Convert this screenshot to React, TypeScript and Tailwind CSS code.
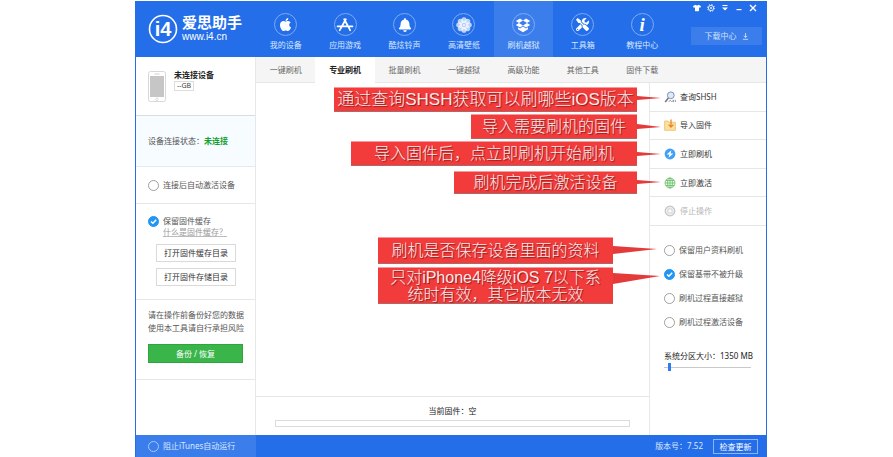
import React, { useState } from "react";
import clsx from "clsx";
import { FaApple, FaBell, FaTools, FaTshirt } from "react-icons/fa";

const AppsIcon = () => (
  <svg viewBox="0 0 18 16" className="w-[18px] h-4" fill="none" stroke="currentColor" strokeWidth="1.8" strokeLinecap="round">
    <path d="M9.8 2.2 4.6 11.6M8.2 2.2l5.2 9.4M1.6 9.4h9M13.6 9.4h2.8M3.7 13.2l.2-.4M14.1 13.2l-.2-.4" />
  </svg>
);

const FlowerIcon = () => (
  <svg viewBox="0 0 16 16" className="w-4 h-4" fill="currentColor">
    {[0, 45, 90, 135, 180, 225, 270, 315].map((deg) => (
      <ellipse key={deg} cx="8" cy="3.6" rx="2.7" ry="3.4" opacity="0.7" transform={`rotate(${deg} 8 8)`} />
    ))}
    <circle cx="8" cy="8" r="2" fill="#a9c8fa" />
    <circle cx="8" cy="8" r="1" />
  </svg>
);

// open box seen from above, flaps folded out
const BoxIcon = () => (
  <svg viewBox="0 0 16 16" className="w-4 h-4" fill="currentColor">
    <path d="M5 1.500 8 3.400 4 5.900 .8 3.900zM11 1.500 8 3.400l4 2.500 3.200-2zM4 5.900 8 8.400 5 10.400 .8 7.900zM12 5.900 8 8.400l3 2 4.200-2.500z" />
    <path d="M3 10.300 5 11.600 8 9.600l3 2 2-1.300v2L8 15.300 3 12.300z" />
  </svg>
);

const navItems = [
  { label: "我的设备", icon: <FaApple size={15} /> },
  { label: "应用游戏", icon: <AppsIcon /> },
  { label: "酷炫铃声", icon: <FaBell size={14} /> },
  { label: "高清壁纸", icon: <FlowerIcon /> },
  { label: "刷机越狱", icon: <BoxIcon /> },
  { label: "工具箱", icon: <FaTools size={13} /> },
  {
    label: "教程中心",
    icon: <span className="font-['Liberation_Serif',serif] text-[19px] leading-none font-bold italic">i</span>,
  },
];

const tabs = ["一键刷机", "专业刷机", "批量刷机", "一键越狱", "高级功能", "其他工具", "固件下载"];

const SearchIcon = () => (
  <svg viewBox="0 0 12 12" className="w-3 h-3" fill="none">
    <circle cx="6.8" cy="4.3" r="3.4" fill="#dce9fb" stroke="#8493ad" />
    <path d="M4.4 7 1.2 11" stroke="#77777f" strokeWidth="1.6" />
    <path d="M5 10.8c.2-1.4 1.4-1.8 2-.9s1.400 1 1.800-.3M9.400 8.800v2.200M11.300 8.800v2.200" stroke="#8a8a8a" strokeWidth=".9" />
  </svg>
);

const ImportIcon = () => (
  <svg viewBox="0 0 12 12" className="w-3 h-3" fill="none">
    <path d="M.6 2h3.600l1 1.300h6.200v8H.6z" fill="#fddf9f" stroke="#f0bb66" strokeWidth=".8" />
    <path d="M7 .6v7M4.600 5.600 7 8.100l2.400-2.500" stroke="#e2882b" strokeWidth="1.300" />
  </svg>
);

const FlashIcon = () => (
  <svg viewBox="0 0 12 12" className="w-3 h-3">
    <circle cx="6" cy="6" r="5.400" fill="#3fa0f8" />
    <path d="M7.400 2.200 2.600 6.500h2.700l-.8 3.300 4.900-4.300H6.600z" fill="#fff" />
  </svg>
);

const GlobeIcon = () => (
  <svg viewBox="0 0 12 12" className="w-3 h-3" fill="#e6f8e3" stroke="#5cb85c" strokeWidth=".7">
    <circle cx="6" cy="6" r="5" />
    <ellipse cx="6" cy="6" rx="2.400" ry="5" fill="none" />
    <path d="M6 1v10M1 6h10M1.800 3.500h8.400M1.800 8.500h8.400" />
  </svg>
);

const StopIcon = () => (
  <svg viewBox="0 0 12 12" className="w-3 h-3">
    <circle cx="6" cy="6" r="4.800" fill="#eee" stroke="#c4c4c4" strokeWidth="1.200" />
    <rect x="4" y="4" width="4" height="4" fill="#fafafa" stroke="#d0d0d0" strokeWidth=".8" />
  </svg>
);

const actions = [
  { label: "查询SHSH", icon: <SearchIcon /> },
  { label: "导入固件", icon: <ImportIcon /> },
  { label: "立即刷机", icon: <FlashIcon /> },
  { label: "立即激活", icon: <GlobeIcon /> },
  { label: "停止操作", icon: <StopIcon />, disabled: true },
];

interface RoundCheckProps {
  label: string;
  defaultChecked?: boolean;
  light?: boolean;
}

const RoundCheck: React.FC<RoundCheckProps> = ({ label, defaultChecked = false, light = false }) => {
  const [checked, setChecked] = useState(defaultChecked);

  return (
    <label className="flex items-center gap-1 whitespace-nowrap">
      <span className="relative flex w-[11px] h-[11px] shrink-0">
        <input
          type="checkbox"
          checked={checked}
          onChange={(e) => setChecked(e.target.checked)}
          className={clsx(
            "appearance-none w-full h-full rounded-full border checked:bg-[#2196f3] checked:border-[#2196f3]",
            light ? "border-[#a9c8fa]" : "border-[#a0a0a0] bg-white"
          )}
        />
        {checked && (
          <svg viewBox="0 0 11 11" className="absolute inset-0 pointer-events-none" fill="none" stroke="#fff" strokeWidth="1.500">
            <path d="M3 5.500 4.900 7.300 8.200 3.800" />
          </svg>
        )}
      </span>
      {label}
    </label>
  );
};

interface CalloutProps {
  className: string;
  // points of the arrow, measured from the box's top right corner
  arrow: string;
  children: React.ReactNode;
}

const Callout: React.FC<CalloutProps> = ({ className, arrow, children }) => (
  <div
    className={clsx(
      "relative z-10 flex items-center justify-center bg-[#f23c3c] border-t border-t-[#f79a9a] border-b border-b-[#a86a6a] text-center font-light text-[#ffe9e9] whitespace-nowrap [text-shadow:1px_1px_1px_#8a1c1c] font-['Liberation_Sans','Noto_Sans_CJK_SC',sans-serif]",
      className
    )}
  >
    {children}
    <svg className="absolute left-full -top-px w-12 h-6" viewBox="0 0 48 24">
      <polygon points={arrow} fill="#e53a3a" />
    </svg>
  </div>
);

const App = () => {
  const [page, setPage] = useState(4);
  const [tab, setTab] = useState(1);
  const [size, setSize] = useState(5);

  return (
    <div className="min-h-screen flex bg-white pt-px pl-[135px] pr-[126px] font-['Noto_Sans','Noto_Sans_CJK_SC',sans-serif] text-[8px] leading-3 text-[#555]">
      <div className="flex-1 flex flex-col border-x border-[#246ee9]">
        <header className="flex h-14 bg-[#246ee9] text-white">
          <div className="flex items-center w-[120px] pl-3 gap-1 shrink-0">
            <svg viewBox="0 0 30 30" className="w-[30px] h-[30px] shrink-0">
              <circle cx="15" cy="15" r="13.500" fill="none" stroke="#fff" strokeWidth="1.600" />
              <text x="15" y="22" textAnchor="middle" fontSize="20" fontWeight="700" fill="#fff" fontFamily="Liberation Sans, sans-serif">i4</text>
            </svg>
            <div className="flex flex-col gap-px whitespace-nowrap">
              <div className="text-[15px] leading-[15px] font-bold">爱思助手</div>
              <div className="text-[10px] leading-3 font-['Liberation_Sans',sans-serif]">www.i4.cn</div>
            </div>
          </div>
          <nav className="flex w-[416px]">
            {navItems.map((item, index) => (
              <button
                key={item.label}
                type="button"
                onClick={() => setPage(index)}
                className={clsx("flex-1 flex flex-col items-center pt-3", index === page && "bg-[#3b7eeb]")}
              >
                <span className="flex items-center justify-center w-[23px] h-[23px] rounded-full border border-[#7dabf4]">
                  {item.icon}
                </span>
                <span className="mt-[3px] text-[#dbe8fd]">{item.label}</span>
              </button>
            ))}
          </nav>
          <div className="flex-1 flex flex-col items-end pr-1">
            <div className="flex items-center gap-1 h-[14px] pr-1">
              <button type="button" aria-label="换肤" className="w-[10px] flex justify-center"><FaTshirt size={8} /></button>
              <button type="button" aria-label="设置" className="w-[10px] flex justify-center">
                <svg viewBox="0 0 10 10" className="w-2 h-2" fill="none" stroke="currentColor">
                  <circle cx="5" cy="5" r="3.300" strokeWidth="1" />
                  <circle cx="5" cy="5" r="4.300" strokeWidth="1.200" strokeDasharray="1.500 1.880" />
                  <circle cx="5" cy="5" r="1" />
                </svg>
              </button>
              <button type="button" aria-label="菜单" className="w-[10px] flex justify-center">
                <svg viewBox="0 0 8 8" className="w-2 h-2" fill="currentColor"><path d="M1.500 1h5v1h-5zM1 3.500h6L4 6.500z" /></svg>
              </button>
              <button type="button" aria-label="最小化" className="w-[10px] flex justify-center">
                <svg viewBox="0 0 8 8" className="w-2 h-2" fill="currentColor"><path d="M1.500 5h5v1.200h-5z" /></svg>
              </button>
              <button type="button" aria-label="关闭" className="w-[10px] flex justify-center">
                <svg viewBox="0 0 8 8" className="w-2 h-2" stroke="currentColor" strokeWidth="1.400"><path d="m1 1 6 6M7 1 1 7" /></svg>
              </button>
            </div>
            <button type="button" className="flex items-center justify-center gap-[5px] w-[71px] h-[18px] mt-3 bg-[#3b7eeb] text-[#cfe0fb]">
              下载中心
              <svg viewBox="0 0 8 8" className="w-[7px] h-[7px]" fill="none" stroke="currentColor">
                <path d="M4 0v5M2 3.200l2 2 2-2M1 7.200h6" />
              </svg>
            </button>
          </div>
        </header>

        <div className="flex-1 flex">
          <aside className="w-[120px] shrink-0 border-r border-[#e8e8e8]">
            <section className="flex gap-2 h-[59px] pl-3 pt-[14px] border-b border-[#d5dde2]">
              <svg viewBox="0 0 18 31" className="w-[18px] h-[31px]">
                <rect x=".5" y=".5" width="17" height="30" rx="2" fill="#fff" stroke="#d8d8d8" />
                <rect x="2" y="5" width="14" height="21" fill="#c6c6c6" />
                <path d="M6.500 3h5" stroke="#d0d0d0" />
                <circle cx="9" cy="28.300" r="1.300" fill="none" stroke="#cfcfcf" strokeWidth=".7" />
              </svg>
              <div className="-mt-[2px]">
                <div className="font-bold text-[#222]">未连接设备</div>
                <span className="block w-5 border border-[#ddd] text-[7px] leading-[8px] text-center text-[#444]">--GB</span>
              </div>
            </section>
            <section className="flex items-center h-[51px] pl-3 bg-[#f6fcff] border-b border-[#e6eaec]">
              设备连接状态：<span className="font-bold text-[#12a12c]">未连接</span>
            </section>
            <section className="flex items-center h-[37px] pl-3 border-b border-[#e8e8e8]">
              <RoundCheck label="连接后自动激活设备" />
            </section>
            <section className="flex flex-col h-24 pl-3 pt-[11px] border-b border-[#e8e8e8]">
              <RoundCheck label="保留固件缓存" defaultChecked />
              <a href="#cache" className="ml-[15px] self-start leading-[10px] text-[#999] underline decoration-[#bbb] underline-offset-1">什么是固件缓存？</a>
              <button type="button" className="w-20 h-[18px] ml-2 mt-[7px] shrink-0 border border-[#d9d9d9] text-[#333]">打开固件缓存目录</button>
              <button type="button" className="w-20 h-[18px] ml-2 mt-[6px] shrink-0 border border-[#d9d9d9] text-[#333]">打开固件存储目录</button>
            </section>
            <section className="h-20 px-3 pt-2 border-b border-[#e8e8e8]">
              <p className="leading-[13px] whitespace-nowrap">
                请在操作前备份好您的数据
                <br />
                使用本工具请自行承担风险
              </p>
              <button type="button" className="w-full h-[19px] mt-[10px] bg-[#39b54a] border border-[#2fa540] text-white">备份 / 恢复</button>
            </section>
          </aside>

          <div className="flex-1 flex flex-col">
            <div className="h-[26px] bg-[#f5f5f5] border-b border-[#e6e6e6]">
              <div className="flex w-[416px] h-full" role="tablist">
                {tabs.map((name, index) => (
                  <button
                    key={name}
                    type="button"
                    role="tab"
                    aria-selected={index === tab}
                    onClick={() => setTab(index)}
                    className={clsx("flex-1", index === tab ? "-mb-px bg-white font-bold text-[#222]" : "text-[#666]")}
                  >
                    {name}
                  </button>
                ))}
              </div>
            </div>

            <div className="flex-1 flex">
              <main className="flex-1 flex flex-col">
                <div className="flex flex-col items-end pt-1 pr-3 text-[16px] leading-[17px]">
                  <Callout className="w-[303px] h-[25px] text-[17px]" arrow="0,9 24,11 0,13">通过查询SHSH获取可以刷哪些iOS版本</Callout>
                  <Callout className="w-[166px] h-[25px] mt-[2px]" arrow="0,10 24,13 0,15">导入需要刷机的固件</Callout>
                  <Callout className="w-[286px] h-[25px] mt-[2px]" arrow="0,11 24,13 0,15">导入固件后，点立即刷机开始刷机</Callout>
                  <Callout className="w-[183px] h-[23px] mt-[5px]" arrow="0,9 24,11 0,13">刷机完成后激活设备</Callout>
                </div>
                <div className="flex flex-col items-end gap-[3px] mt-[43px] pr-9 text-[16px] leading-[17px]">
                  <Callout className="w-[235px] h-[27px]" arrow="0,9 44,12 0,17">刷机是否保存设备里面的资料</Callout>
                  <Callout className="w-[235px] h-[37px]" arrow="0,6 47,9 0,17">
                    只对iPhone4降级iOS 7以下系
                    <br />
                    统时有效，其它版本无效
                  </Callout>
                </div>
                <div className="mt-auto h-[39px] px-[19px] pt-2 border-t border-[#e8e8e8]">
                  <div id="firmware" className="text-center text-[#222]">当前固件：空</div>
                  <div role="progressbar" aria-labelledby="firmware" aria-valuenow={0} className="h-[7px] mt-[3px] border border-[#dcdcdc]" />
                </div>
              </main>

              <aside className="w-[117px] shrink-0 border-l border-[#e8e8e8]">
                <div className="grid grid-rows-5 h-[143px]">
                  {actions.map((action) => (
                    <button
                      key={action.label}
                      type="button"
                      disabled={action.disabled}
                      className="flex items-center gap-1 pl-[14px] border-b border-[#e6e6e6] text-[#333] disabled:text-[#b5b5b5]"
                    >
                      {action.icon}
                      {action.label}
                    </button>
                  ))}
                </div>
                <div className="flex flex-col gap-3 pl-[14px] pt-[18px]">
                  <RoundCheck label="保留用户资料刷机" />
                  <RoundCheck label="保留基带不被升级" defaultChecked />
                  <RoundCheck label="刷机过程直接越狱" />
                  <RoundCheck label="刷机过程激活设备" />
                </div>
                <div className="pl-[14px] pr-[15px] mt-[22px]">
                  <label htmlFor="partition" className="block whitespace-nowrap text-[#222]">系统分区大小：1350 MB</label>
                  <input
                    id="partition"
                    type="range"
                    value={size}
                    onChange={(e) => setSize(Number(e.target.value))}
                    className="block appearance-none w-full h-2 mt-px bg-[linear-gradient(#c9c9c9,#c9c9c9)] bg-[length:100%_1px] bg-center bg-no-repeat [&::-webkit-slider-thumb]:appearance-none [&::-webkit-slider-thumb]:w-[3px] [&::-webkit-slider-thumb]:h-2 [&::-webkit-slider-thumb]:bg-[#2f7bf0]"
                  />
                </div>
              </aside>
            </div>
          </div>
        </div>

        <footer className="flex h-[22px] bg-[#246ee9] text-[#dbe8fd]">
          <div className="flex items-center w-[120px] pl-3 bg-[#3b7eeb]">
            <RoundCheck label="阻止iTunes自动运行" light />
          </div>
          <div className="flex-1 flex items-center justify-end gap-[10px] pr-2">
            <span>版本号：7.52</span>
            <button type="button" className="w-[45px] h-[15px] leading-[13px] border border-[#8db5f5] text-white">检查更新</button>
          </div>
        </footer>
      </div>
    </div>
  );
};

export default App;
